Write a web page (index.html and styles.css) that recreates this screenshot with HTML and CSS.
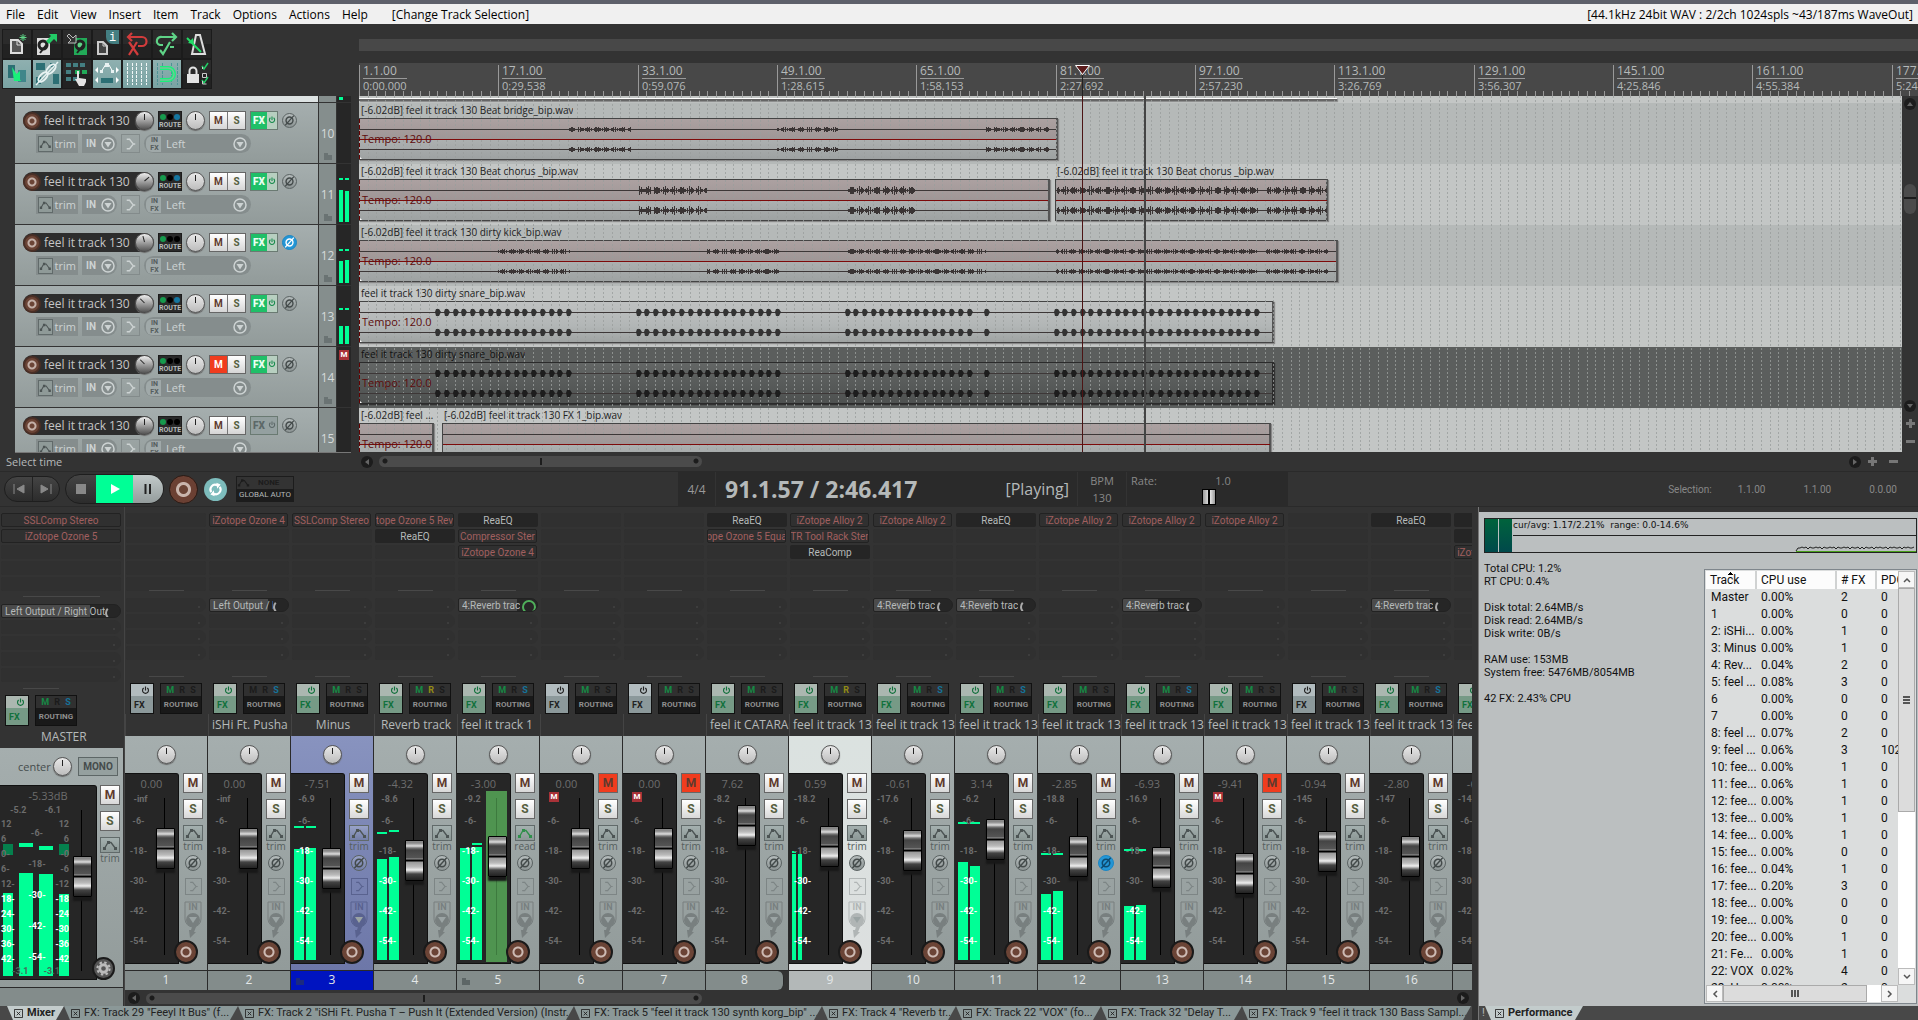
FILE: index.html
```
<!DOCTYPE html>
<html lang="en">
<head>
  <meta charset="UTF-8">
  <meta name="viewport" content="width=device-width, initial-scale=1.0">
  <title>REAPER</title>
  <link rel="stylesheet" href="styles.css">
</head>
<body>
  <!-- shared icons -->
  <svg class="sprite" aria-hidden="true">
    <symbol id="i-power" viewBox="0 0 10 10"><path d="M3 2.2A3.3 3.3 0 1 0 7 2.2M5 .6V5" fill="none" stroke="currentColor" stroke-width="1.3"/></symbol>
    <symbol id="i-env" viewBox="0 0 16 12"><path d="M2.5 9.5 6 3.5h3l4.500 6" fill="none" stroke="currentColor" stroke-width="1.3"/><path d="M1 8h3v3H1zM5 2h3v3H5zM12 8h3v3h-3z" fill="currentColor"/></symbol>
    <symbol id="i-phase" viewBox="0 0 12 12"><circle cx="6" cy="6" r="3.200" fill="none" stroke="currentColor" stroke-width="1.3"/><path d="M2 10.500 10 1.500" stroke="currentColor" stroke-width="1.2"/></symbol>
    <symbol id="i-fork" viewBox="0 0 18 18"><path d="M5 4h3l4 5-4 5H5M12 9h2" fill="none" stroke="currentColor" stroke-width="1.4"/></symbol>
    <symbol id="i-down" viewBox="0 0 14 14"><circle cx="7" cy="7" r="6" fill="none" stroke="currentColor" stroke-width="1.5"/><path d="M3.500 5h7L7 10.500z" fill="currentColor"/></symbol>
    <symbol id="i-folder" viewBox="0 0 8 8"><path d="M0 1h4v2h4v5H0z" fill="currentColor"/></symbol>
    <symbol id="i-close" viewBox="0 0 10 10"><path d="M.5.5h9v9h-9zM3 3l4 4M7 3 3 7" fill="none" stroke="currentColor"/></symbol>
    <symbol id="i-gear" viewBox="0 0 16 16"><circle cx="8" cy="8" r="4" fill="none" stroke="currentColor" stroke-width="3"/><circle cx="8" cy="8" r="6.500" fill="none" stroke="currentColor" stroke-width="2.200" stroke-dasharray="2.600 2.500"/></symbol>
    <symbol id="i-input" viewBox="0 0 18 38"><path d="M1 1h16v17a8 8 0 0 1-16 0z" fill="none" stroke="currentColor"/><circle cx="9" cy="19" r="7" fill="currentColor"/><path class="cut" d="M5 16h8l-4 6z"/><path d="M8 26h4l-2 5h2l-6 6-1-8h2z" fill="currentColor"/></symbol>
  </svg>

  <div class="titlebar"></div>
  <nav class="menu" aria-label="Main menu">
    <button>File</button>
    <button>Edit</button>
    <button>View</button>
    <button>Insert</button>
    <button>Item</button>
    <button>Track</button>
    <button>Options</button>
    <button>Actions</button>
    <button>Help</button>
    <span class="last-action">[Change Track Selection]</span>
    <span class="audio-info">[44.1kHz 24bit WAV : 2/2ch 1024spls ~43/187ms WaveOut]</span>
  </nav>

  <main class="arrange">
    <section class="tcp">
      <div class="toolbar">
        <button aria-label="New project">
          <svg viewBox="0 0 28 28"><path d="M8 10h7l4 4v9H8z" fill="#555" stroke="#ddd" stroke-width="2"/><path d="M14 10v5h5" fill="none" stroke="#ddd"/><path d="M20 4v7M16.500 7.500h7M17.500 5l5 5M22.500 5l-5 5" stroke="#5fd487"/></svg>
        </button>
        <button aria-label="Open project">
          <svg viewBox="0 0 28 28"><rect x="4" y="8" width="13" height="17" fill="#ddd"/><circle cx="10" cy="15" r="5.500" fill="#222"/><circle cx="10" cy="15" r="2.500" fill="#ddd"/><path d="M7 23l7-9" stroke="#222" stroke-width="2"/><path d="M16 4h8v8l-3-3-5 5-3-3 5-5z" fill="#22cc66"/></svg>
        </button>
        <button aria-label="Save project">
          <svg viewBox="0 0 28 28"><rect x="11" y="8" width="13" height="17" fill="#22aa58"/><circle cx="17" cy="15" r="5.500" fill="#222"/><circle cx="17" cy="15" r="2.500" fill="#5fd487"/><path d="M14 23l7-9" stroke="#222" stroke-width="2"/><path d="M13 5v8H5l3-3-4-4 2-2 4 4z" fill="#333" stroke="#bbb"/></svg>
        </button>
        <button aria-label="Project settings">
          <svg viewBox="0 0 28 28"><path d="M5 12h5l4 4v8H5z" fill="#444" stroke="#ccc" stroke-width="2"/><path d="M10 12v4h4" fill="none" stroke="#ccc"/><path d="M13 0h13v14h-6a7 7 0 0 1-7-7z" fill="#447f82"/><text x="16" y="11" class="info-mark">i</text></svg>
        </button>
        <button aria-label="Undo">
          <svg viewBox="0 0 28 28"><path d="M5 7h14a4 4 0 0 1 0 9h-4M9 3 5 7l4 4M6 12l9 13M14 12 6 25" fill="none" stroke="#d23c3c" stroke-width="2.200"/></svg>
        </button>
        <button aria-label="Redo">
          <svg viewBox="0 0 28 28"><path d="M23 7H9a4 4 0 0 0-2 8l3 0M19 3l4 4-4 4M7 20l3 4 7-12M17 17h4" fill="none" stroke="#5fd487" stroke-width="2.200"/></svg>
        </button>
        <button aria-label="Metronome">
          <svg viewBox="0 0 28 28"><path d="M13 5h4l5 19H9z" fill="#333" stroke="#ddd" stroke-width="2"/><path d="M4 8l14 14" stroke="#22dd66" stroke-width="2"/><path d="M5 13l5-5 1 6z" fill="#22dd66"/></svg>
        </button>
        <button class="on" aria-label="Auto-crossfade">
          <svg viewBox="0 0 28 28"><path d="M5 5h7v13H5z" fill="#2c6f74"/><path d="M15 10h8v12h-8z" fill="#3f868a"/><path d="M9 7l9 14h-7zM17 11v10l-7-4z" fill="#19f07a"/></svg>
        </button>
        <button class="on" aria-label="Item grouping">
          <svg viewBox="0 0 28 28"><path d="M3 3h9v7H3zM20 14h6v10h-6zM3 17h5v7H3zM17 3h6v4h-6z" fill="#2c6f74"/><path d="M3 25 25 2" stroke="#e8f2f2" stroke-width="1.500"/><ellipse cx="18" cy="9" rx="6" ry="3" transform="rotate(-46 18 9)" fill="none" stroke="#e8f2f2" stroke-width="2"/><ellipse cx="10" cy="17" rx="6" ry="3" transform="rotate(-46 10 17)" fill="none" stroke="#e8f2f2" stroke-width="2"/></svg>
        </button>
        <button aria-label="Ripple editing">
          <svg viewBox="0 0 28 28"><path d="M3 3h5v4H3zM10 3h5v4h-5zM17 3h5v4h-5zM3 10h5v4H3zM3 17h5v4H3zM10 17h4v4h-4z" fill="#447f82"/><path d="M12 10h5v4h-5zM19 10h5v4h-5z" fill="#22aa58"/><path d="M14 11h2v7l7 1v3l-2 4h-5l-4-7h2z" fill="#e4e4e4"/></svg>
        </button>
        <button class="on" aria-label="Move envelope points">
          <svg viewBox="0 0 28 28"><path d="M8 12l5-8 3 1 4 7" fill="none" stroke="#fff"/><path d="M7 10h3v3H7zM12 3h4v4h-4zM18 10h3v3h-3z" fill="#e8f2f2"/><path d="M8 18h12v5H8z" fill="#2c6f74"/><path d="M5 7v6L2 10zM23 7v6l3-3zM5 17v6l-3-3zM23 17v6l3-3z" fill="#fff"/></svg>
        </button>
        <button class="on" aria-label="Grid lines">
          <svg viewBox="0 0 28 28"><path d="M4.500 3v22M9.500 3v22M13.500 3v22M18.500 3v22M23.500 3v22" stroke="#f2f8f8" stroke-dasharray="3 1"/></svg>
        </button>
        <button class="on" aria-label="Snap">
          <svg viewBox="0 0 28 28"><path d="M4.500 3v22M9.500 3v22M18.500 3v22M24.500 3v22" stroke="#4f9295" stroke-dasharray="3 1"/><path d="M7 8h8a6 6 0 0 1 0 12H7" fill="none" stroke="#19f07a" stroke-width="4"/><path d="M7 8h8a6 6 0 0 1 0 12H7" fill="none" stroke="#7cbf9c" stroke-width="1.300"/></svg>
        </button>
        <button aria-label="Locking">
          <svg viewBox="0 0 28 28"><path d="M4 14h12v9H4z" fill="#e4e4e4"/><path d="M6.500 14v-3a3.500 3.500 0 0 1 7 0v3" fill="none" stroke="#e4e4e4" stroke-width="2"/><path d="M19 6l2 3 4-6M19 20l2 3 4-6" fill="none" stroke="#22cc66" stroke-width="1.500"/><path d="M19.500 13.500h4v4h-4zM19.500 9v-2M19.500 21v3h4" fill="none" stroke="#ccc"/></svg>
        </button>
      </div>
      <div class="track-list" id="track-list"></div>
      <div class="status">Select time</div>
    </section>

    <section class="timeline">
      <div class="overview"></div>
      <div class="ruler" id="ruler"></div>
      <div class="lanes-row">
        <div class="lanes" id="lanes"></div>
        <div class="vscroll">
          <button class="round up" aria-label="Scroll up"></button>
          <span class="vthumb"></span>
          <button class="round down" aria-label="Scroll down"></button>
          <button class="zoom plus" aria-label="Zoom in vertically"></button>
          <button class="zoom minus" aria-label="Zoom out vertically"></button>
        </div>
      </div>
      <div class="hscroll">
        <button class="round left" aria-label="Scroll left"></button>
        <span class="hthumb"></span>
        <button class="round right" aria-label="Scroll right"></button>
        <button class="zoom plus" aria-label="Zoom in"></button>
        <button class="zoom minus" aria-label="Zoom out"></button>
      </div>
    </section>
  </main>

  <section class="transport">
    <div class="pill nav-pill">
      <button aria-label="Go to start"><svg viewBox="0 0 12 10"><path d="M1 0v10M11 1v8L4 5z" fill="#888" stroke="#888"/></svg></button>
      <button aria-label="Go to end"><svg viewBox="0 0 12 10"><path d="M11 0v10M1 1v8l7-4z" fill="#888" stroke="#888"/></svg></button>
    </div>
    <div class="pill play-pill">
      <button aria-label="Stop"><svg viewBox="0 0 10 10"><path d="M0 0h10v10H0z" fill="#888"/></svg></button>
      <button class="play" aria-label="Play"><svg viewBox="0 0 10 10"><path d="M1 0v10l9-5z" fill="#fff"/></svg></button>
      <button class="pause" aria-label="Pause"><svg viewBox="0 0 10 10"><path d="M1.500 0h2v10h-2zM6 0h2v10H6z" fill="#222"/></svg></button>
    </div>
    <button class="rec-main" aria-label="Record"></button>
    <button class="loop" aria-label="Repeat"><svg viewBox="0 0 20 20"><path d="M5 13A5.500 5.500 0 0 1 12 5M15 7a5.500 5.500 0 0 1-7 8" fill="none" stroke="#fff" stroke-width="2.500"/><path d="M11 2l5 2-4 5zM9 18l-5-2 4-5z" fill="#fff"/></svg></button>
    <button class="global-auto"><span class="none"><svg><use href="#i-env"/></svg>NONE</span><span>GLOBAL AUTO</span></button>
    <div class="clock">
      <button class="sig">4/4</button>
      <div class="time"><span class="pos">91.1.57 / 2:46.417</span><span class="state">[Playing]</span></div>
      <div class="bpm"><span>BPM</span><span>130</span></div>
      <div class="rate">
        <div class="rate-top"><label for="rate">Rate:</label><span>1.0</span></div>
        <input type="range" id="rate" min="0" max="100" value="50">
      </div>
    </div>
    <div class="selection"><span>Selection:</span><span>1.1.00</span><span>1.1.00</span><span>0.0.00</span></div>
  </section>

  <section class="dock">
    <div class="mixer-pane">
      <div class="mixer">
        <div class="master" id="master"></div>
        <div class="mixer-right">
          <div class="strips" id="strips"></div>
          <div class="hscroll mixer-scroll">
            <button class="round left" aria-label="Scroll mixer left"></button>
            <span class="hthumb"></span>
            <button class="round right" aria-label="Scroll mixer right"></button>
          </div>
        </div>
      </div>
      <div class="tabs" id="mixer-tabs"></div>
    </div>
    <div class="perf-pane">
      <div class="perf">
        <div class="graph">
          <span class="bar"></span><span class="bar"></span>
          <div class="plot">
            <span>cur/avg: 1.17/2.21%&nbsp; range: 0.0-14.6%</span>
            <svg id="cpu-plot"></svg>
          </div>
        </div>
        <div class="perf-body">
          <div class="stats">
            <p>Total CPU: 1.2%<br>RT CPU: 0.4%</p>
            <p>Disk total: 2.64MB/s<br>Disk read: 2.64MB/s<br>Disk write: 0B/s</p>
            <p>RAM use: 153MB<br>System free: 5476MB/8054MB</p>
            <p>42 FX: 2.43% CPU</p>
          </div>
          <div class="list">
            <div class="list-view">
              <table>
                <thead><tr><th class="sorted">Track</th><th>CPU use</th><th># FX</th><th>PDC</th></tr></thead>
                <tbody id="perf-rows"></tbody>
              </table>
            </div>
            <div class="win-v">
              <button aria-label="Up"><svg viewBox="0 0 8 6"><path d="M1 5l3-3 3 3" fill="none" stroke="#555" stroke-width="1.500"/></svg></button>
              <span class="win-thumb"></span>
              <button aria-label="Down"><svg viewBox="0 0 8 6"><path d="M1 1l3 3 3-3" fill="none" stroke="#555" stroke-width="1.500"/></svg></button>
            </div>
            <div class="win-h">
              <button aria-label="Left"><svg viewBox="0 0 6 8"><path d="M5 1 2 4l3 3" fill="none" stroke="#555" stroke-width="1.500"/></svg></button>
              <span class="win-thumb"></span>
              <button aria-label="Right"><svg viewBox="0 0 6 8"><path d="M1 1l3 3-3 3" fill="none" stroke="#555" stroke-width="1.500"/></svg></button>
            </div>
          </div>
        </div>
      </div>
      <div class="tabs"><span class="bang">!</span><button class="tab active"><svg><use href="#i-close"/></svg>Performance</button></div>
    </div>
  </section>
  <script src="app.js"></script>
</body>
</html>
```
FILE: styles.css
```
:root {
  --bg: #333;
  --panel-top: #a5aeae;
  --panel-bottom: #929b9a;
  --green: #00ff96;
  --fx-green: #1fbf68;
  --rec: #6b4436;
  --text: #b5b9b9;
  --ui: "Open Sans", "Noto Sans", sans-serif;
  --small: Roboto, "Liberation Sans", sans-serif;
}
* {
  box-sizing: border-box;
}
body {
  margin: 0;
  height: 100vh;
  display: flex;
  flex-direction: column;
  overflow: hidden;
  background: var(--bg);
  color: var(--text);
  font-family: var(--ui);
  font-size: 12px;
}
button {
  margin: 0;
  padding: 0;
  border: none;
  background: none;
  color: inherit;
  font: inherit;
  cursor: pointer;
}
svg {
  display: block;
}
.sprite {
  position: absolute;
  width: 0;
  height: 0;
}
.titlebar {
  height: 4px;
  background: #5d606a;
}
.menu {
  display: flex;
  align-items: center;
  height: 20px;
  background: #f0f0f0;
  color: #000;
}
.menu button {
  padding: 0 6px;
}
.last-action {
  margin-left: 18px;
}
.audio-info {
  margin-left: auto;
  padding-right: 5px;
}

/* arrange view */
.arrange {
  flex: 1;
  display: flex;
  gap: 8px;
  min-height: 0;
}
.tcp {
  flex: none;
  width: 351px;
  display: flex;
  flex-direction: column;
}
.toolbar {
  display: grid;
  grid-template-columns: repeat(7, 28px);
  grid-auto-rows: 28px;
  gap: 2px;
  align-self: flex-start;
  margin: 5px 0 7px 2px;
  padding: 1px;
  background: #1b1b1b;
}
.toolbar button {
  background: linear-gradient(#2b2b2b 50%, #222 50%);
}
.toolbar button.on {
  background: linear-gradient(#8fb0b0, #79a3a3);
}
.info-mark {
  font: 12px "Liberation Mono", monospace;
  fill: #fff;
}
.track-list {
  flex: 1;
  min-height: 0;
  overflow: hidden;
  margin-left: 15px;
  border-bottom: 1px solid #777;
}
.status {
  height: 18px;
  padding-left: 6px;
  line-height: 17px;
  font-size: 11px;
}
.track {
  display: grid;
  grid-template-columns: 1fr 17px 14px;
  column-gap: 1px;
  height: 61px;
  border-bottom: 1px solid #333;
}
.track.peek {
  height: 7px;
}
.track-main {
  padding: 8px 0 0 8px;
  background: linear-gradient(var(--panel-top), var(--panel-bottom));
}
.peek .track-main {
  padding: 0;
  background: #dde3e3;
}
.track-row {
  display: flex;
  align-items: center;
  height: 19px;
}
.track-row.sub {
  gap: 4px;
  margin: 4px 0 0 13px;
  color: #cdd3d3;
}
.name-pill {
  display: flex;
  align-items: center;
  gap: 3px;
  width: 131px;
  height: 19px;
  border-radius: 10px;
  background: #2d2d2d;
  white-space: nowrap;
}
.name-pill .name {
  width: 91px;
  overflow: hidden;
  color: #c5c5c5;
}
.arm {
  flex: none;
  width: 18px;
  height: 18px;
  border: 2px solid #4a2f26;
  border-radius: 50%;
  background: radial-gradient(circle, var(--rec) 2px, #c4b0a8 3px, #c4b0a8 4px, var(--rec) 5px);
}
.knob {
  position: relative;
  flex: none;
  width: 19px;
  height: 19px;
  border: 1px solid #555;
  border-radius: 50%;
  background: linear-gradient(#e8e8e8, #bdbdbd);
  box-shadow: 0 1px 1px #666;
}
.knob::after {
  content: "";
  position: absolute;
  left: 8px;
  top: 2px;
  width: 1px;
  height: 6px;
  background: #222;
  transform-origin: 50% 100%;
}
.knob.vol {
  margin-left: -2px;
  background: linear-gradient(#eee, #555);
}
.knob.t1::after { transform: rotate(50deg); }
.knob.t2::after { transform: rotate(-15deg); }
.knob.t3::after { transform: rotate(-45deg); }
.route {
  width: 24px;
  height: 19px;
  margin: 0 4px;
  border: 1px solid #1c1c1c;
  background: #2a2a2a;
  color: #b5b9b9;
  font: bold 7px/8px var(--small);
}
.route .leds {
  display: flex;
  justify-content: space-around;
  height: 9px;
  align-items: center;
}
.leds i {
  width: 6px;
  height: 6px;
  border-radius: 50%;
  background: #000;
}
.leds i.g { background: #169a4d; }
.leds i.b { background: #1576a0; }
.ms {
  display: flex;
  margin: 0 4px;
  border: 1px solid #666;
}
.ms button {
  width: 17px;
  height: 17px;
  background: linear-gradient(#fff, #d5d5d5);
  color: #5f3a2e;
  font: bold 10px/17px var(--small);
}
.ms button + button {
  border-left: 1px solid #777;
  width: 18px;
  color: #566040;
}
.ms button.muted {
  background: #f03c1e;
  color: #fff;
}
.fx {
  display: flex;
  width: 28px;
  height: 19px;
  border: 1px solid #6a7a72;
  background: #b7cfc0;
  color: #158a4b;
  font: bold 10px/17px var(--small);
}
.fx b {
  width: 16px;
  background: var(--fx-green);
  color: #e9fff2;
}
.fx svg {
  width: 8px;
  height: 10px;
  margin: 3px 1px;
}
.fx.off,
.fx.off b {
  background: #94a0a0;
  color: #5c6868;
}
.phase {
  width: 15px;
  height: 15px;
  margin-left: 4px;
  border: 1px solid #5a6262;
  border-radius: 50%;
  background: linear-gradient(#b5bcbc, #8b9393);
  color: #444b4b;
}
.phase svg {
  width: 13px;
  height: 13px;
}
.phase.on {
  border-color: #1b86c4;
  background: #2496d6;
  color: #0d4a70;
}
.track .phase.on {
  color: #fff;
}
.chip {
  display: flex;
  align-items: center;
  height: 19px;
  padding: 0 2px;
  background: #858d8d;
  font-size: 11px;
}
.chip.trim {
  width: 42px;
  gap: 2px;
}
.chip.trim svg {
  width: 16px;
  height: 16px;
  border: 1px solid #616a6a;
  background: #8f9a98;
  color: #4c5454;
}
.chip.in {
  width: 35px;
  padding-left: 4px;
  justify-content: space-between;
  border-radius: 0 10px 10px 0;
  font: bold 10px var(--small);
}
.chip.in svg,
.chip.input svg {
  width: 14px;
  height: 14px;
}
.chip.fork {
  width: 19px;
  padding: 0;
  border: 1px solid #838b8b;
  background: none;
}
.chip.input {
  width: 107px;
  gap: 5px;
  border-radius: 10px;
}
.chip.input small {
  width: 15px;
  padding-left: 2px;
  background: #a0a9a9;
  color: #555d5d;
  font: bold 7px/8px var(--small);
  border-radius: 6px 0 0 6px;
}
.chip.input svg {
  margin-left: auto;
  margin-right: 2px;
}
.track-num {
  display: flex;
  flex-direction: column;
  align-items: center;
  justify-content: flex-end;
  gap: 10px;
  padding-bottom: 3px;
  background: #858e8d;
  color: #d5dada;
}
.track-num svg {
  width: 8px;
  height: 8px;
  color: #6a7373;
}
.track-meter {
  position: relative;
  display: flex;
  align-items: flex-end;
  gap: 2px;
  padding: 0 2px 2px;
  background: #262626;
}
.track-meter i {
  width: 4px;
  background: var(--green);
}
.track-meter i.pk {
  position: absolute;
  height: 2px;
}
.track-meter i.pk.r {
  left: 8px;
}
.m-flag {
  position: absolute;
  left: 2px;
  top: 3px;
  width: 10px;
  background: #a83238;
  color: #fff;
  font: bold 8px/10px var(--small);
  text-align: center;
}

/* timeline */
.timeline {
  flex: 1;
  min-width: 0;
  display: flex;
  flex-direction: column;
}
.overview {
  height: 12px;
  margin: 15px 0 12px;
  background: #484848;
}
.ruler {
  position: relative;
  height: 33px;
  overflow: hidden;
  background: #484848;
}
.ruler svg {
  position: absolute;
  inset: 0;
  width: 100%;
  height: 100%;
}
.mark {
  position: absolute;
  top: 2px;
  height: 31px;
  padding-left: 3px;
  border-left: 1px solid #999;
}
.mark span {
  display: block;
  font-size: 11px;
  line-height: 11px;
}
.mark .beat {
  padding-bottom: 1px;
  border-bottom: 1px solid #999;
  font-size: 12px;
  line-height: 12px;
  margin-bottom: 1px;
}
.lanes-row {
  flex: 1;
  display: flex;
  min-height: 0;
}
.lanes {
  position: relative;
  flex: 1;
  overflow: hidden;
}
.lane {
  position: relative;
  height: 61px;
  background: #c3c6c5;
}
.lane.alt { background: #b5b9b8; }
.lane.muted { background: #5b5e5d; }
.lane.peek {
  height: 7px;
}
.lane.peek .clip {
  top: 2px;
  height: 3px;
  border: none;
  border-bottom: 2px solid #666;
  background: #fff;
}
.grid {
  position: absolute;
  z-index: 1;
  inset: 0;
  width: 100%;
  height: 100%;
}
.clip-name {
  position: absolute;
  z-index: 2;
  top: 0;
  overflow: hidden;
  padding-left: 2px;
  color: #222;
  font-size: 10px;
  line-height: 15px;
  text-overflow: ellipsis;
  white-space: nowrap;
}
.muted .clip-name {
  color: #111;
}
.clip {
  position: absolute;
  top: 15px;
  height: 42px;
  border: 1px solid #444;
  border-right: 2px solid #555;
  border-left: none;
  background: linear-gradient(#aca1a1, #9f9696 50%, #adb1b1 50%, #9ea2a2);
  box-shadow: 1px 1px 1px #888;
}
.clip svg {
  position: relative;
  z-index: 2;
}
.clip.split {
  border-left: 1px solid #444;
}
.clip.plain {
  background: linear-gradient(#bfc1c1, #b2b6b6 60%, #9fa3a2);
}
.muted .clip {
  border-color: #2b2b2b;
  background: linear-gradient(#636665, #4e5150);
  box-shadow: 1px 1px 1px #333;
}
.muted .clip svg {
  fill: #1d1d1d;
}
.tempo {
  position: absolute;
  z-index: 2;
  left: 3px;
  top: 13px;
  color: #5d0c0c;
  font-size: 11px;
  line-height: 14px;
  white-space: nowrap;
}
.cursor {
  position: absolute;
  z-index: 3;
  top: 0;
  bottom: 0;
  width: 1px;
  background: #4c1414;
}
.cursor.playhead {
  width: 2px;
  background: #444;
}
.vscroll {
  display: flex;
  flex-direction: column;
  align-items: center;
  gap: 4px;
  width: 16px;
  padding: 2px 0 4px;
}
.round {
  position: relative;
  flex: none;
  width: 12px;
  height: 12px;
  border-radius: 50%;
  background: #1c1c1c;
}
.round::after {
  content: "";
  position: absolute;
  left: 4px;
  top: 3px;
  border: 3px solid transparent;
  border-left: 4px solid #666;
  border-right: none;
}
.round.left::after { transform: rotate(180deg); }
.round.up::after { transform: rotate(-90deg); }
.round.down::after { transform: rotate(90deg); }
.vthumb {
  width: 12px;
  height: 30px;
  margin: 70px 0 auto;
  border-radius: 6px;
  background: linear-gradient(#4b4b4b 13px, #1c1c1c 13px, #1c1c1c 15px, #4b4b4b 15px);
}
.zoom {
  width: 10px;
  height: 14px;
  background: linear-gradient(#777, #777) center / 9px 3px no-repeat;
}
.zoom.plus {
  background: linear-gradient(#777, #777) center / 9px 3px no-repeat, linear-gradient(#777, #777) center / 3px 9px no-repeat;
}
.hscroll {
  display: flex;
  align-items: center;
  gap: 6px;
  height: 19px;
  padding: 0 20px 0 2px;
}
.hscroll .minus {
  margin-left: 5px;
}
.hthumb {
  position: relative;
  width: 323px;
  height: 11px;
  border-radius: 6px;
  background:
    radial-gradient(circle at 6px 5px, #1c1c1c 2px, transparent 3px),
    radial-gradient(circle at calc(100% - 6px) 5px, #1c1c1c 2px, transparent 3px),
    linear-gradient(#1c1c1c, #1c1c1c) center / 2px 7px no-repeat,
    #4b4b4b;
}
.hscroll .right {
  margin-left: auto;
}

/* transport */
.transport {
  display: flex;
  align-items: center;
  height: 36px;
  padding-left: 4px;
  border-top: 1px solid #2a2a2a;
  border-bottom: 1px solid #2a2a2a;
}
.pill {
  display: flex;
  border: 1px solid #1e1e1e;
  border-radius: 15px;
  overflow: hidden;
  background: linear-gradient(#444, #2c2c2c);
}
.pill button {
  display: flex;
  align-items: center;
  justify-content: center;
}
.nav-pill button {
  width: 27px;
  height: 24px;
}
.nav-pill button + button {
  border-left: 1px solid #222;
}
.nav-pill svg {
  width: 12px;
  height: 10px;
}
.play-pill {
  margin-left: 5px;
}
.play-pill button {
  width: 30px;
  height: 28px;
}
.play-pill svg {
  width: 10px;
  height: 10px;
}
.play-pill .play {
  width: 37px;
  background: var(--green);
}
.play-pill .pause {
  background: linear-gradient(#c2caca, #949c9c);
}
.rec-main {
  width: 29px;
  height: 29px;
  margin-left: 5px;
  border: 1px solid #2b1a14;
  border-radius: 50%;
  background: radial-gradient(circle, var(--rec) 4px, #c9b5ad 5px, #c9b5ad 7px, #6b4033 8px);
}
.loop {
  width: 23px;
  height: 23px;
  margin-left: 6px;
  border-radius: 50%;
  background: #7dbcbc;
}
.loop svg {
  width: 17px;
  height: 17px;
  margin: 3px;
}
.global-auto {
  width: 58px;
  height: 26px;
  margin-left: 9px;
  border: 1px solid #1c1c1c;
  background: #1c1c1c;
  font: 8px/12px var(--small);
  white-space: nowrap;
}
.global-auto span {
  display: block;
}
.global-auto .none {
  display: flex;
  gap: 8px;
  background: #333;
  color: #1c1c1c;
  font-weight: bold;
}
.global-auto .none svg {
  width: 13px;
  height: 11px;
}
.clock {
  display: flex;
  align-self: stretch;
  margin-left: 384px;
  background: #2a2a2a;
}
.sig {
  width: 38px;
  color: #999;
  border-right: 1px solid #333;
}
.time {
  display: flex;
  align-items: center;
  justify-content: space-between;
  width: 361px;
  padding: 0 8px 0 9px;
}
.pos {
  font-size: 23px;
  font-weight: 700;
}
.state {
  font-size: 16px;
}
.bpm {
  display: flex;
  flex-direction: column;
  align-items: center;
  width: 50px;
  border-left: 1px solid #333;
  border-right: 1px solid #333;
  color: #888;
  font-size: 11px;
  line-height: 17px;
}
.rate {
  width: 161px;
  color: #888;
  font-size: 11px;
}
.rate-top {
  display: flex;
  padding: 0 4px;
  line-height: 17px;
}
.rate-top span {
  flex: 1;
  text-align: center;
  padding-left: 5px;
}
.rate input {
  -webkit-appearance: none;
  appearance: none;
  display: block;
  width: 150px;
  height: 16px;
  margin: 0 0 0 7px;
  background: none;
}
.rate input::-webkit-slider-thumb {
  -webkit-appearance: none;
  width: 14px;
  height: 16px;
  border: 1px solid #000;
  background: linear-gradient(90deg, #999, #ddd 45%, #000 45%, #000 55%, #eee 55%, #999);
}
.selection {
  display: flex;
  gap: 38px;
  margin-left: auto;
  padding-right: 21px;
  color: #888;
  font: 10px var(--small);
}
.selection span:first-child {
  margin-right: -12px;
}

/* docker */
.dock {
  display: flex;
}
.mixer-pane {
  flex: 1;
  min-width: 0;
  border-right: 1px solid #777;
}
.mixer {
  display: flex;
  margin-right: 6px;
}
.mixer-right {
  flex: 1;
  min-width: 0;
}
.strips {
  display: flex;
  overflow: hidden;
}
.strip {
  flex: none;
  width: 83px;
  padding-top: 6px;
}
.master {
  flex: none;
  width: 125px;
  padding-top: 6px;
  border-right: 1px solid #444;
}
.slot {
  height: 14px;
  margin: 0 2px 2px 1px;
  overflow: hidden;
  border-radius: 2px;
  background: #303030;
  font: 10px/15px var(--small);
  display: flex;
  justify-content: center;
  white-space: nowrap;
}
.slot.fx-on {
  background: #252525;
}
.slot.fx-off {
  margin-right: 3px;
  border: 1px solid #222;
  color: #a05f5f;
  line-height: 13px;
}
.slot.send {
  position: relative;
  justify-content: flex-start;
  border-radius: 2px 7px 7px 2px;
}
.slot.send.used {
  padding-left: 3px;
  border: 1px solid #222;
  line-height: 13px;
  background: linear-gradient(90deg, #4b4b4b 45%, #262626 45%);
}
.slot.send.used.full {
  background: linear-gradient(90deg, #4b4b4b 75%, #262626 75%);
}
.slot.send span {
  max-width: calc(100% - 15px);
  overflow: hidden;
}
.slot.send::after {
  content: "";
  position: absolute;
  right: 6px;
  top: 8px;
  width: 2px;
  height: 2px;
  background: #3d3d3d;
}
.slot.send.used::after {
  right: 1px;
  top: 1px;
  width: 10px;
  height: 10px;
  border: 2px solid transparent;
  border-left-color: #aaa;
  border-radius: 50%;
  background: none;
}
.slot.send.used.green::after {
  border-color: #4fae5a;
}
.rule {
  width: 35px;
  height: 1px;
  margin: -3px auto 7px;
  background: #484848;
}
.rule.low {
  margin: 16px auto 6px;
}
.fx-row {
  display: flex;
  gap: 6px;
  padding-left: 5px;
  height: 31px;
}
.fx-box {
  display: flex;
  flex-direction: column;
  width: 24px;
  height: 31px;
  border: 1px solid #111;
  background: #abb7b0;
  color: #11713c;
  font: bold 9px/16px var(--small);
}
.fx-box svg {
  width: 9px;
  height: 9px;
  margin: 2px 3px 0 auto;
}
.fx-box span {
  margin-top: auto;
  padding: 1px 0 0 3px;
  text-align: left;
  background: #769a86;
}
.fx-box.off {
  background: #b2bcbf;
  color: #222;
}
.fx-box.off span {
  background: #8c999b;
}
.routing {
  width: 42px;
  height: 31px;
  border: 1px solid #111;
  background: #191919;
  color: #8f8f8f;
  font: bold 8px/17px var(--small);
}
.routing span {
  display: flex;
  justify-content: space-evenly;
  height: 12px;
  background: #303030;
  color: #1b1b1b;
  font-size: 9px;
  line-height: 13px;
}
.routing i {
  font-style: normal;
}
.routing .m { color: #158a45; }
.routing .s { color: #15739a; }
.routing .r { color: #928c15; }
.strip-name {
  height: 22px;
  padding: 0 3px;
  overflow: hidden;
  line-height: 22px;
  text-align: center;
  white-space: nowrap;
  border-left: 1px solid #444;
}
.strip-name.long {
  text-align: left;
}
.strip-body {
  position: relative;
  height: 235px;
  border-right: 1px solid #2a2a2a;
  border-bottom: 1px solid #2a2a2a;
  background: linear-gradient(var(--panel-top), var(--panel-bottom));
  padding-top: 9px;
}
.strip-body > .knob {
  display: block;
  margin: 0 auto 9px;
}
.strip-body.selected {
  background: linear-gradient(#8893bf, #6d77a8);
}
.strip-body.light {
  background: linear-gradient(#dbe2e0, #dcdfdf);
}
.strip-cols {
  display: flex;
}
.well {
  position: relative;
  width: 54px;
  height: 191px;
  border: 1px solid #111;
  border-left: none;
  border-radius: 0 3px 0 0;
  background: #262626;
  color: #6d6d6d;
}
.db {
  display: block;
  height: 18px;
  font-size: 11px;
  line-height: 20px;
  text-align: center;
}
.peak-db {
  display: block;
  width: 31px;
  height: 14px;
  font: bold 9px/14px var(--small);
  text-align: center;
}
.scale {
  position: relative;
  z-index: 1;
  width: 27px;
  margin: 0;
  padding: 0;
  list-style: none;
  font: bold 9px/30px var(--small);
  text-align: center;
}
.scale .lit {
  color: #fff;
}
.meter,
.peak {
  position: absolute;
  width: 10px;
  background: var(--green);
}
.meter {
  bottom: 3px;
}
.peak {
  height: 2px;
}
.meter.l, .peak.l { left: 3px; }
.meter.r, .peak.r { left: 15px; }
.thin .meter, .thin .peak { width: 4px; }
.thin .r { left: 9px; }
.groove {
  position: absolute;
  left: 39px;
  top: 24px;
  width: 1px;
  height: 157px;
  background: #000;
}
.fader {
  -webkit-appearance: none;
  appearance: none;
  writing-mode: vertical-lr;
  direction: rtl;
  position: absolute;
  z-index: 2;
  left: 30px;
  top: 7px;
  width: 20px;
  height: 180px;
  margin: 0;
  background: none;
}
.fader::-webkit-slider-thumb {
  -webkit-appearance: none;
  width: 19px;
  height: 41px;
  border: 1px solid #000;
  border-radius: 1px;
  background: linear-gradient(#888 2px, #ddd 5px, #777 7px, #444 9px, #555 17px, #999 18px, #000 19px, #000 20px, #999 21px, #bbb 26px, #eee 29px, #999 31px, #444 33px, #222);
  box-shadow: 0 4px 2px #181818;
}
.auto-lane {
  position: absolute;
  left: 29px;
  top: 17px;
  bottom: 1px;
  width: 21px;
  background: #4f9450;
}
.auto-lane + .groove {
  background: #3d7a3e;
}
.side {
  display: flex;
  flex-direction: column;
  align-items: center;
  flex: 1;
}
.sq {
  width: 20px;
  height: 20px;
  margin-bottom: 6px;
  border: 1px solid #666;
  background: linear-gradient(#fff, #d8d8d8);
  color: #5f3a2e;
  font: bold 12px/18px var(--small);
}
.sq.solo { color: #566040; }
.sq.muted {
  background: #f03c1e;
}
.env-btn {
  width: 20px;
  height: 16px;
  border: 1px solid #616a6a;
  background: linear-gradient(#a4b0af, #8c9896);
  color: #4c5454;
}
.env-btn svg {
  width: 16px;
  height: 12px;
  margin: 1px;
}
.env-btn.read {
  color: #2f8f4a;
}
.side small {
  font-size: 10px;
  line-height: 11px;
  color: #565e5e;
  margin-bottom: 3px;
}
.side .phase {
  width: 16px;
  height: 16px;
  margin: 0 0 7px;
}
.side .phase svg {
  width: 14px;
  height: 14px;
}
.fork-btn {
  width: 17px;
  height: 17px;
  margin-bottom: 6px;
  border: 1px solid #7d8585;
  color: #7d8585;
}
.fork-btn svg {
  width: 15px;
  height: 15px;
}
.input-btn {
  position: relative;
  color: #787f7f;
  font: bold 9px/12px var(--small);
}
.input-btn span {
  position: absolute;
  left: 0;
  right: 0;
  top: 0;
}
.input-btn svg {
  width: 18px;
  height: 38px;
}
.cut {
  fill: #9ba4a4;
}
.light .fork-btn, .light .input-btn {
  color: #b0b5b5;
  border-color: #b0b5b5;
}
.selected .fork-btn, .selected .input-btn {
  color: #59628f;
  border-color: #59628f;
}
.selected .env-btn, .selected .phase {
  background: linear-gradient(#98a2c8, #7480a8);
}
.arm.big {
  position: absolute;
  z-index: 3;
  left: 49px;
  bottom: 6px;
  width: 24px;
  height: 24px;
  border: 2px solid #1a1a1a;
  background: radial-gradient(circle, var(--rec) 3px, #cdbab3 4px, #cdbab3 5px, var(--rec) 6px);
}
.strip-num {
  position: relative;
  height: 19px;
  border-right: 1px solid #2a2a2a;
  background: #838c8b;
  color: #e4e8e8;
  line-height: 18px;
  text-align: center;
}
.strip-num svg {
  position: absolute;
  left: 5px;
  top: 5px;
  width: 8px;
  height: 10px;
  color: #5d6666;
}
.strip-num.selected {
  background: #0014c0;
}
.strip-num.selected svg {
  color: #1b2a80;
}
.strip-num.light {
  background: #b3b8b8;
}
.strip-num.last {
  margin-right: 5px;
  border-radius: 0 6px 6px 0;
}
.well .m-flag {
  left: 9px;
  top: 18px;
}

/* master strip */
.master .slot {
  margin-right: 3px;
}
.master .rule {
  width: 77px;
  margin: 5px 0 7px 23px;
}
.master .rule.low {
  width: 36px;
  margin: 6px 0 6px 23px;
}
.master .strip-name {
  height: 22px;
  padding: 0 0 0 41px;
  border: none;
  text-align: left;
}
.master-body {
  position: relative;
  height: 240px;
  margin-right: 1px;
  border-bottom: 1px solid #2a2a2a;
  background: linear-gradient(var(--panel-top), var(--panel-bottom));
}
.master-pan {
  display: flex;
  align-items: center;
  height: 37px;
  padding-left: 18px;
  color: #454c4c;
  font-size: 11px;
}
.master-pan .knob {
  margin-left: auto;
}
.master-pan .mono {
  width: 40px;
  height: 19px;
  margin: 0 5px 0 6px;
  border: 1px solid #5d6666;
  background: #95a09f;
  font: bold 10px/17px var(--small);
}
.master .well {
  width: 97px;
  height: 195px;
}
.master-peaks {
  display: flex;
  justify-content: center;
  gap: 18px;
  padding-right: 25px;
  font: bold 9px/13px var(--small);
}
.master .scale {
  position: absolute;
  top: 32px;
  left: 22px;
  width: 30px;
  line-height: 31px;
}
.master .scale.out {
  left: 1px;
  top: 31px;
  width: 16px;
  line-height: 15px;
  text-align: left;
}
.master .scale.out.right {
  left: 53px;
  text-align: right;
}
.master .groove {
  left: 81px;
  height: 161px;
}
.master .fader {
  left: 72px;
}
.mm.a { left: 3px; }
.mm.b { left: 19px; width: 14px; }
.mm.c { left: 39px; width: 14px; }
.mm.d { left: 59px; }
.clip-mark {
  position: absolute;
  top: 58px;
  width: 10px;
  height: 11px;
  background: #05804d;
}
.clip-mark.a { left: 3px; }
.clip-mark.d { left: 59px; }
.mm-low {
  position: absolute;
  bottom: 1px;
  left: 12px;
  width: 48px;
  display: flex;
  justify-content: space-between;
  color: #4a6a5a;
  font: bold 9px/13px var(--small);
}
.gear {
  position: absolute;
  z-index: 3;
  left: 92px;
  bottom: 7px;
  width: 23px;
  height: 23px;
  border: 2px solid #1a1a1a;
  border-radius: 50%;
  background: #555;
  color: #bbb;
}
.gear svg {
  width: 15px;
  height: 15px;
  margin: 2px;
}
.master-foot {
  height: 18px;
  margin-right: 1px;
  background: #838c8b;
}
.mixer-scroll {
  height: 16px;
  padding: 0 3px;
}
.mixer-scroll .hthumb {
  width: 556px;
}

/* tabs */
.tabs {
  display: flex;
  height: 14px;
  overflow: hidden;
  background: #484848;
  font: 11px/14px var(--small);
}
.mixer-pane .tabs {
  margin-right: 6px;
  padding-left: 7px;
}
.tab {
  display: flex;
  align-items: center;
  gap: 4px;
  flex: none;
  padding: 0 4px 0 7px;
  background: #8b9898;
  color: #222;
  white-space: nowrap;
  clip-path: polygon(0 0, 100% 0, calc(100% - 8px) 100%, 6px 100%);
}
.tab svg {
  flex: none;
  width: 9px;
  height: 9px;
}
.tab.active {
  background: #c3cccc;
  font-weight: bold;
}
.bang {
  width: 6px;
  padding-left: 3px;
}
.bang + .tab {
  width: 98px;
  padding-left: 10px;
}

/* performance */
.perf-pane {
  flex: none;
  width: 439px;
  display: flex;
  flex-direction: column;
}
.perf {
  flex: 1;
  display: flex;
  flex-direction: column;
  margin-top: 5px;
  padding: 6px 1px 2px 5px;
  background: #bbbfc0;
  color: #111;
}
.graph {
  display: flex;
  height: 35px;
  border: 1px solid #222;
}
.graph .bar {
  width: 13px;
  margin-right: 1px;
  background: linear-gradient(#00633c, #00494b);
}
.plot {
  position: relative;
  flex: 1;
  background: linear-gradient(#222, #222) 0 16px / 100% 1px no-repeat;
  font: 9px/12px "DejaVu Sans", sans-serif;
}
.plot svg {
  position: absolute;
  right: 0;
  bottom: 0;
  width: 150px;
  height: 8px;
}
.perf-body {
  flex: 1;
  display: flex;
  justify-content: space-between;
}
.stats {
  padding-top: 9px;
  font: 11px/13px var(--small);
}
.stats p {
  margin: 0 0 13px;
}
.list {
  display: grid;
  grid-template-columns: 1fr 17px;
  grid-template-rows: 1fr 17px;
  width: 213px;
  margin-top: 16px;
  padding: 1px;
  border: 1px solid #7f868c;
  background: #dbdddd;
}
.list-view {
  height: 414px;
  overflow: hidden;
}
.list table {
  width: 240px;
  table-layout: fixed;
  border-collapse: collapse;
  font: 12px/17px var(--small);
}
.list th {
  height: 18px;
  padding: 0 4px;
  border-right: 2px solid #d0d2d2;
  background: #fcfcfc;
  font-weight: normal;
  text-align: left;
}
.list th:nth-child(1) { width: 50px; }
.list th:nth-child(2) { width: 80px; }
.list th:nth-child(3) { width: 40px; }
.list td {
  height: 17px;
  padding: 0 5px;
  overflow: hidden;
  white-space: nowrap;
}
.list th.sorted {
  background: conic-gradient(from 135deg at 50% 0, #000 90deg, #fcfcfc 0) center 1px / 7px 3px no-repeat, #fcfcfc;
}
.win-v,
.win-h {
  display: flex;
  background: #fff;
}
.win-v {
  flex-direction: column;
}
.win-v button,
.win-h button {
  display: flex;
  align-items: center;
  justify-content: center;
  width: 17px;
  height: 17px;
  border: 1px solid #bbb;
  background: #f6f6f6;
}
.win-v svg { width: 8px; height: 6px; }
.win-h svg { width: 6px; height: 8px; }
.win-thumb {
  border: 1px solid #aaa;
}
.win-v .win-thumb {
  height: 224px;
  margin-bottom: auto;
  background: repeating-linear-gradient(#555 0 2px, #dcdcdc 2px 3px) center / 7px 8px no-repeat, #dcdcdc;
}
.win-h .win-thumb {
  width: 144px;
  margin-right: auto;
  background: repeating-linear-gradient(90deg, #555 0 2px, #dcdcdc 2px 3px) center / 8px 7px no-repeat, #dcdcdc;
}
```
FILE: app.js
```
const BARS_VISIBLE = 177.2;

const lanesElement = document.getElementById('lanes');
const rulerElement = document.getElementById('ruler');
const trackList = document.getElementById('track-list');
const stripsElement = document.getElementById('strips');
const masterElement = document.getElementById('master');

const pxPerBar = lanesElement.clientWidth / BARS_VISIBLE;
const barX = bar => Math.round(bar * pxPerBar);
const icon = name => `<svg><use href="#i-${name}"/></svg>`;

const tracks = [
  { n: 10, leds: 'gxb', knob: 't0' },
  { n: 11, leds: 'gxb', knob: 't1', meter: [32, 31], peak: 14 },
  { n: 12, leds: 'gxx', knob: 't2', meter: [22, 23], peak: 24, phase: true },
  { n: 13, leds: 'gxb', knob: 't3', meter: [18, 18], peak: 22 },
  { n: 14, leds: 'gxx', knob: 't3', muted: true },
  { n: 15, leds: 'gxx', knob: 't0', fxOff: true }
];

trackList.innerHTML = '<div class="track peek"><div class="track-main"></div><div class="track-num"></div><div class="track-meter"><i style="height:3px"></i></div></div>' +
  tracks.map(t => `
  <div class="track">
    <div class="track-main">
      <div class="track-row">
        <span class="name-pill"><button class="arm" aria-label="Record arm"></button><span class="name">feel it track 130</span><span class="knob vol ${t.knob}"></span></span>
        <button class="route"><span class="leds">${[...t.leds].map(c => `<i class="${c}"></i>`).join('')}</span>ROUTE</button>
        <span class="knob"></span>
        <span class="ms"><button class="${t.muted ? 'muted' : ''}">M</button><button>S</button></span>
        <button class="fx ${t.fxOff ? 'off' : ''}"><b>FX</b>${icon('power')}</button>
        <button class="phase ${t.phase ? 'on' : ''}" aria-label="Phase">${icon('phase')}</button>
      </div>
      <div class="track-row sub">
        <button class="chip trim">${icon('env')}trim</button>
        <button class="chip in">IN${icon('down')}</button>
        <button class="chip fork" aria-label="Monitor">${icon('fork')}</button>
        <button class="chip input"><small>IN<br>FX</small>Left${icon('down')}</button>
      </div>
    </div>
    <div class="track-num">${t.n}${icon('folder')}</div>
    <div class="track-meter">
      ${t.meter ? t.meter.map(h => `<i style="height:${h}px"></i>`).join('') : ''}
      ${t.peak ? `<i class="pk" style="top:${t.peak}px"></i><i class="pk r" style="top:${t.peak}px"></i>` : ''}
      ${t.muted ? '<span class="m-flag">M</span>' : ''}
    </div>
  </div>`).join('');

// ruler
const times = ['0:00.000', '0:29.538', '0:59.076', '1:28.615', '1:58.153', '2:27.692', '2:57.230', '3:26.769', '3:56.307', '4:25.846', '4:55.384', '5:24.923'];
let ticks = '';
for (let b = 0; b <= BARS_VISIBLE + 2; b++) ticks += `M${barX(b) + 0.5} 28v5`;
rulerElement.innerHTML = `<svg><path d="${ticks}" stroke="#999"/></svg>` +
  times.map((t, i) => `<div class="mark" style="left:${barX(i * 16)}px"><span class="beat">${i * 16 + 1}.1.00</span><span>${t}</span></div>`).join('') +
  `<svg><path d="M${barX(83) - 6.5} 2.500h14l-7 9z" fill="#5c1c1c" stroke="#fff"/><path d="M${barX(83) + 0.5} 12v21" stroke="#222"/></svg>`;

// clips: start and end in bars, waves are [from, to] in bars
const snareHits = [[9, 24], [32, 48], [56, 70], [72, 72], [80, 103]];
const lanes = [
  { cls: 'peek', clips: [{ from: 0, to: 112.3 }] },
  { cls: 'alt', clips: [{ name: '[-6.02dB] feel it track 130 Beat bridge_bip.wav', from: 0, to: 80.3, amp: 2.4, waves: [[24, 31.2], [48, 55.2], [72, 79.2]] }] },
  { cls: '', clips: [
    { name: '[-6.02dB] feel it track 130 Beat chorus _bip.wav', from: 0, to: 79.4, amp: 4, waves: [[32, 40], [56, 64]] },
    { name: '[-6.02dB] feel it track 130 Beat chorus _bip.wav', from: 79.9, to: 111.3, amp: 4, waves: [[80, 103.1], [104.2, 111]] }
  ] },
  { cls: 'alt', clips: [{ name: '[-6.02dB] feel it track 130 dirty kick_bip.wav', from: 0, to: 112.4, amp: 2.4, waves: [[16, 24.2], [40, 48.5], [56, 72], [80, 103.2], [104.2, 111.3]] }] },
  { cls: '', clips: [{ name: 'feel it track 130 dirty snare_bip.wav', from: 0, to: 105.1, plain: true, hits: snareHits }] },
  { cls: 'muted', clips: [{ name: 'feel it track 130 dirty snare_bip.wav', from: 0, to: 105.1, plain: true, hits: snareHits }] },
  { cls: '', clips: [
    { name: '[-6.02dB] feel it track 130 FX 1_bip.wav', from: 0, to: 8.6 },
    { name: '[-6.02dB] feel it track 130 FX 1_bip.wav', from: 9.5, to: 104.7 }
  ] }
];

function wavePath(clip, y) {
  let d = '';
  (clip.waves || []).forEach(([a, b]) => {
    for (let x = barX(a); x < barX(b); x++) {
      const h = Math.round(clip.amp * Math.abs(Math.sin(x * 1.7) * Math.cos(x * 0.37)));
      d += `M${x - barX(clip.from) + 0.5} ${y - h}v${h * 2 + 1}`;
    }
  });
  return d;
}

function hits(clip, y) {
  let s = '';
  (clip.hits || []).forEach(([a, b]) => {
    for (let i = a; i <= b; i++) s += `<path d="M${barX(i) - 2} ${y}l1-3h3l2 3-2 4h-3z"/>`;
  });
  return s;
}

function renderClip(clip) {
  const x = barX(clip.from);
  const w = barX(clip.to) - x;
  if (!clip.name) return `<div class="clip" style="left:${x}px;width:${w}px"></div>`;
  return `
    <span class="clip-name" style="left:${x}px;max-width:${w}px">${clip.name}</span>
    <div class="clip ${clip.plain ? 'plain' : ''} ${x ? 'split' : ''}" style="left:${x}px;width:${w}px">
      <svg width="${w - 2}" height="40" fill="#333">
        <path d="M0 10.500h${w}M0 30.500h${w}" stroke="#3d3737"/>
        <path d="${wavePath(clip, 10)}${wavePath(clip, 30)}" stroke="#3a3434"/>
        ${hits(clip, 10)}${hits(clip, 30)}
        ${clip.plain ? '' : `<path d="M0 20.500h${w}" stroke="#7d0a0a"/>`}
        ${x === 0 ? '<path d="M0 37l4 4H0z" fill="#fff"/><path d="M.5 0v40" stroke="#600" stroke-dasharray="4 2"/>' : ''}
      </svg>
      ${x === 0 ? '<span class="tempo">Tempo: 120.0</span>' : ''}
    </div>`;
}

let grid = '';
for (let b = 1; b < BARS_VISIBLE; b++) grid += `M${barX(b) + 0.5} 0v400`;
lanesElement.innerHTML = lanes.map(l => `<div class="lane ${l.cls}">${l.clips.map(renderClip).join('')}</div>`).join('') +
  `<svg class="grid"><path d="${grid}" stroke="#9a9d9c" stroke-opacity=".8" stroke-dasharray="2 2"/></svg>` +
  `<div class="cursor" style="left:${barX(83)}px"></div><div class="cursor playhead" style="left:${barX(90.1)}px"></div>`;

// mixer strips: top values are pixels from the top of the meter well
const strips = [
  { name: '', fx: [], db: '0.00', peakDb: '-inf', fader: 54, route: 'm', fxOff: true },
  { name: 'iSHi Ft. Pusha', fx: ['-iZotope Ozone 4'], send: 'Left Output / R', sendCls: 'full', db: '0.00', peakDb: '-inf', fader: 54, route: 's' },
  { name: 'Minus', fx: ['-SSLComp Stereo'], db: '-7.51', peakDb: '-6.9', fader: 74, route: 'm', meter: [75, 74], peak: [52, 52], cls: 'selected', folder: true },
  { name: 'Reverb track', fx: ['-tope Ozone 5 Rev', 'ReaEQ'], db: '-4.32', peakDb: '-8.6', fader: 66, route: 'mr', meter: [85, 83], peak: [58, 56] },
  { name: 'feel it  track 1', fx: ['ReaEQ', '-Compressor Ster', '-iZotope Ozone 4'], send: '4:Reverb trac', sendCls: 'full green', db: '-3.00', peakDb: '-9.2', fader: 62, route: 'ms', meter: [74, 73], peak: [74, 69], auto: true, folder: true },
  { name: '', fx: [], db: '0.00', fader: 54, route: 'm', fxOff: true, muted: true },
  { name: '', fx: [], db: '0.00', fader: 54, route: 'm', fxOff: true, muted: true },
  { name: 'feel it CATARAC', fx: ['ReaEQ', '-ope Ozone 5 Equa'], db: '7.62', peakDb: '-8.2', fader: 31, route: 'm', last: true },
  { name: 'feel it track 130', fx: ['-iZotope Alloy 2', '-TR Tool Rack Ster', 'ReaComp'], db: '0.59', peakDb: '-18.2', fader: 52, route: 'mr', meter: [80, 80], peak: [77, 80], thin: true, cls: 'light' },
  { name: 'feel it track 130', fx: ['-iZotope Alloy 2'], send: '4:Reverb trac', db: '-0.61', peakDb: '-17.6', fader: 56, route: 'ms' },
  { name: 'feel it track 130', fx: ['ReaEQ'], send: '4:Reverb trac', db: '3.14', peakDb: '-6.2', fader: 45, route: 'ms', meter: [88, 92], peak: [48, 48] },
  { name: 'feel it track 130', fx: ['-iZotope Alloy 2'], db: '-2.85', peakDb: '-18.8', fader: 62, route: 'm', meter: [120, 117], peak: [79, 79], phase: true },
  { name: 'feel it track 130', fx: ['-iZotope Alloy 2'], send: '4:Reverb trac', db: '-6.93', peakDb: '-16.9', fader: 73, route: 'ms', meter: [132, 131], peak: [75, 75] },
  { name: 'feel it track 130', fx: ['-iZotope Alloy 2'], db: '-9.41', fader: 79, route: 'm', muted: true },
  { name: 'feel it track 130', fx: [], db: '-0.94', peakDb: '-145', fader: 57, route: 'm', fxOff: true },
  { name: 'feel it track 130', fx: ['ReaEQ'], send: '4:Reverb trac', sendCls: 'full', db: '-2.80', peakDb: '-147', fader: 62, route: 'ms' },
  { name: 'feel it track 130', fx: ['ReaEQ', 'ReaComp', '-iZotope Ozone 4'], db: '-6.02', peakDb: '-14.3', fader: 60, route: 'm' }
];

function slots(fx) {
  let html = '';
  for (let i = 0; i < 5; i++) {
    const f = fx[i];
    if (!f) html += '<div class="slot"></div>';
    else html += f[0] === '-' ? `<div class="slot fx-off">${f.slice(1)}</div>` : `<div class="slot fx-on">${f}</div>`;
  }
  return html;
}

function sends(text, cls, count) {
  let html = text ? `<div class="slot send used ${cls || ''}"><span>${text}</span></div>` : '<div class="slot send"></div>';
  for (let i = 1; i < count; i++) html += '<div class="slot send"></div>';
  return html;
}

function fxRow(route, off) {
  const led = c => `<i class="${route.includes(c) ? c : ''}">${c.toUpperCase()}</i>`;
  return `<div class="fx-row"><button class="fx-box ${off ? 'off' : ''}">${icon('power')}<span>FX</span></button><button class="routing"><span>${led('m')}${led('r')}${led('s')}</span>ROUTING</button></div>`;
}

const fader = (top, label) => `<input class="fader" type="range" min="0" max="139" value="${146 - top}" aria-label="${label}">`;

function scale(meter) {
  const top = meter ? Math.min(...meter) : 999;
  return `<ul class="scale">${[6, 18, 30, 42, 54].map((v, i) => `<li class="${top < 50 + i * 30 ? 'lit' : ''}">-${v}-</li>`).join('')}</ul>`;
}

function side(s) {
  return `<div class="side">
    <button class="sq ${s.muted ? 'muted' : ''}">M</button>
    <button class="sq solo">S</button>
    <button class="env-btn ${s.auto ? 'read' : ''}" aria-label="Automation">${icon('env')}</button>
    <small>${s.auto ? 'read' : 'trim'}</small>`;
}

stripsElement.innerHTML = strips.map((s, i) => `
  <div class="strip">
    ${slots(s.fx)}<div class="rule"></div>
    ${sends(s.send, s.sendCls, 4)}<div class="rule low"></div>
    ${fxRow(s.route, s.fxOff)}
    <div class="strip-name ${s.name.length > 12 ? 'long' : ''}">${s.name}</div>
    <div class="strip-body ${s.cls || ''}">
      <span class="knob"></span>
      <div class="strip-cols">
        <div class="well ${s.thin ? 'thin' : ''}">
          <span class="db">${s.db}</span>
          <span class="peak-db">${s.peakDb || ''}</span>
          ${scale(s.meter)}
          ${s.auto ? '<span class="auto-lane"></span>' : ''}
          <span class="groove"></span>
          ${s.meter ? s.meter.map((t, k) => `<span class="meter ${'lr'[k]}" style="height:${186 - t}px"></span><span class="peak ${'lr'[k]}" style="top:${s.peak[k]}px"></span>`).join('') : ''}
          ${s.muted ? '<span class="m-flag">M</span>' : ''}
          ${fader(s.fader, 'Volume ' + (i + 1))}
        </div>
        ${side(s)}
          <button class="phase ${s.phase ? 'on' : ''}" aria-label="Phase">${icon('phase')}</button>
          <button class="fork-btn" aria-label="Monitor">${icon('fork')}</button>
          <button class="input-btn"><span>IN</span>${icon('input')}</button>
        </div>
      </div>
      <button class="arm big" aria-label="Record arm"></button>
    </div>
    <div class="strip-num ${s.cls || ''} ${s.last ? 'last' : ''}">${s.folder ? icon('folder') : ''}${i + 1}</div>
  </div>`).join('');

const outScale = right => `<ul class="scale out ${right}">${[12, 6, 0, 6, 12, 18, 24, 30, 36, 42].map((v, i) => {
  const label = i < 2 ? v : right ? '-' + v : v + '-';
  return `<li class="${i > 4 ? 'lit' : ''}">${label}</li>`;
}).join('')}</ul>`;

masterElement.innerHTML = `
  ${slots(['-SSLComp Stereo', '-iZotope Ozone 5'])}<div class="rule"></div>
  ${sends('Left Output / Right Outp', 'full', 5)}<div class="rule low"></div>
  ${fxRow('ms', false)}
  <div class="strip-name">MASTER</div>
  <div class="master-body">
    <div class="master-pan">center<span class="knob"></span><button class="mono">MONO</button></div>
    <div class="strip-cols">
      <div class="well">
        <span class="db">-5.33dB</span>
        <div class="master-peaks"><span>-5.2</span><span>-6.1</span></div>
        ${scale([90])}${outScale('')}${outScale('right')}
        <span class="clip-mark a"></span><span class="clip-mark d"></span>
        <span class="meter mm a" style="height:83px"></span>
        <span class="meter mm b" style="height:103px"></span>
        <span class="meter mm c" style="height:102px"></span>
        <span class="meter mm d" style="height:82px"></span>
        <span class="peak mm b" style="top:57px;height:4px"></span>
        <span class="peak mm c" style="top:60px;height:4px"></span>
        <div class="mm-low"><span>-3.1</span><span>-3.1</span></div>
        <span class="groove"></span>
        ${fader(70, 'Master volume')}
      </div>
      ${side({})}</div>
    </div>
    <button class="gear" aria-label="Master settings">${icon('gear')}</button>
  </div>
  <div class="master-foot"></div>`;

// docker tabs
const tabs = [
  ['Mixer', 57], ['FX: Track 29 "Feeyl It Bus" (f...', 174], ['FX: Track 2 "iSHi Ft. Pusha T – Push It (Extended Version) (Instr...', 336],
  ['FX: Track 5 "feel it  track 130 synth korg_bip" ...', 248], ['FX: Track 4 "Reverb tr...', 134], ['FX: Track 22 "VOX" (fo...', 145],
  ['FX: Track 32 "Delay T...', 141], ['FX: Track 9 "feel it track 130 Bass Sampl...', 229]
];
document.getElementById('mixer-tabs').innerHTML = tabs.map(([t, w], i) => `<button class="tab ${i ? '' : 'active'}" style="width:${w}px">${icon('close')}${t}</button>`).join('');

// performance list
const perf = [
  ['Master', '0.00', 2], ['1', '0.00', 0], ['2: iSHi...', '0.00', 1], ['3: Minus', '0.00', 1], ['4: Rev...', '0.04', 2], ['5: feel ...', '0.08', 3],
  ['6', '0.00', 0], ['7', '0.00', 0], ['8: feel ...', '0.07', 2], ['9: feel ...', '0.06', 3, '1024'], ['10: fee...', '0.00', 1], ['11: fee...', '0.06', 1],
  ['12: fee...', '0.00', 1], ['13: fee...', '0.00', 1], ['14: fee...', '0.00', 1], ['15: fee...', '0.00', 0], ['16: fee...', '0.04', 1],
  ['17: fee...', '0.20', 3], ['18: fee...', '0.00', 0], ['19: fee...', '0.00', 0], ['20: fee...', '0.00', 1], ['21: Fe...', '0.00', 1],
  ['22: VOX', '0.02', 4], ['23: Ha...', '0.00', 2]
];
document.getElementById('perf-rows').innerHTML = perf.map(([name, cpu, fx, pdc]) => `<tr><td>${name}</td><td>${cpu}%</td><td>${fx}</td><td>${pdc || 0}</td></tr>`).join('');

let line = 'M30 7';
for (let x = 32; x < 150; x += 2) line += `L${x} ${5 - Math.round(2 * Math.abs(Math.sin(x * 0.9)))}`;
document.getElementById('cpu-plot').innerHTML = `<path d="${line}" fill="none" stroke="#222"/><path d="M30 7.500h120" stroke="#49a01a"/>`;
```
